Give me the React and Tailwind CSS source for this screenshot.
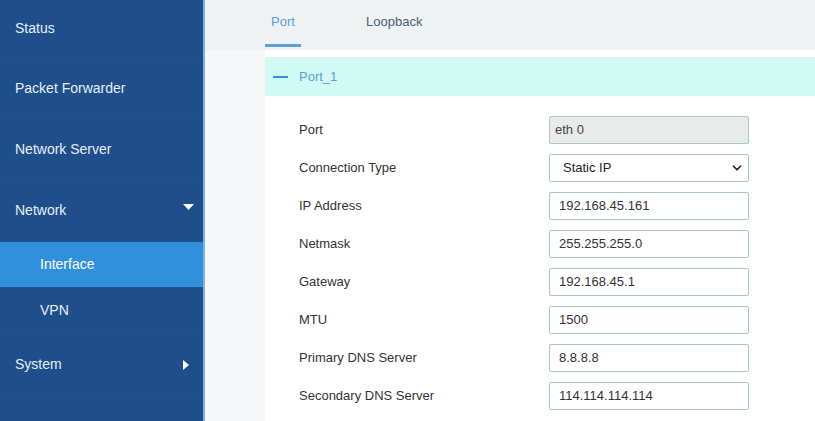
import { ChevronDown } from 'lucide-react';

const font = { fontFamily: '"Liberation Sans", Arial, sans-serif' };

function NavItem({ label, h, sub, active, caret }) {
  return (
    <div
      className={`flex items-center justify-between border-b border-[#21518c] ${sub ? 'pl-10' : 'pl-[15px]'} pr-[9px] text-[14px] ${
        active ? 'bg-[#3190dc] text-white' : 'text-[#e6eef8]'
      } ${h}`}
    >
      <span>{label}</span>
      {caret === 'down' && (
        <svg width="11" height="6" viewBox="0 0 11 6" className="-mt-2">
          <path d="M0 0 L11 0 L5.5 6 Z" fill="#ffffff" />
        </svg>
      )}
      {caret === 'right' && (
        <svg width="6" height="10" viewBox="0 0 6 10" className="mr-[5px]">
          <path d="M0 0 L6 5 L0 10 Z" fill="#ffffff" />
        </svg>
      )}
    </div>
  );
}

function Row({ label, value, kind }) {
  return (
    <div className="flex items-center h-[38px]">
      <div className="w-[284px] pl-[34px] text-[13px] text-[#333]">{label}</div>
      {kind === 'readonly' && (
        <div className="w-[200px] h-[28px] border border-[#a9c7c6] rounded-[2px] bg-[#e8ebea] flex items-center px-[5px] text-[13px] text-[#444]">
          {value}
        </div>
      )}
      {kind === 'select' && (
        <div className="w-[200px] h-[28px] border border-[#a9c7c6] rounded-[2px] bg-white flex items-center justify-between pl-[13px] pr-[4px] text-[13px] text-[#222]">
          <span>{value}</span>
          <ChevronDown size={14} strokeWidth={3} className="text-[#222]" />
        </div>
      )}
      {!kind && (
        <div className="w-[200px] h-[28px] border border-[#a9c7c6] rounded-[2px] bg-white flex items-center px-[9px] text-[13px] text-[#333]">
          {value}
        </div>
      )}
    </div>
  );
}

export default function App() {
  return (
    <div className="flex w-[815px] h-[421px] overflow-hidden bg-[#f5f7f8]" style={font}>
      <aside className="w-[205px] shrink-0 bg-[#1e4f8a] border-r-2 border-[#7fb1dc] flex flex-col">
        <NavItem label="Status" h="h-[58px]" />
        <NavItem label="Packet Forwarder" h="h-[61px]" />
        <NavItem label="Network Server" h="h-[61px]" />
        <NavItem label="Network" h="h-[62px]" caret="down" />
        <NavItem label="Interface" h="h-[46px]" sub active />
        <NavItem label="VPN" h="h-[46px]" sub />
        <NavItem label="System" h="h-[62px]" caret="right" />
      </aside>

      <main className="flex-1 flex flex-col">
        <div className="h-[50px] bg-[#eef2f3] flex items-end pl-[60px] gap-[65px] text-[13px]">
          <div className="flex flex-col items-center">
            <span className="text-[#5a9fd8] px-[5px] pb-[13px]">Port</span>
            <div className="w-[36px] h-[3px] bg-[#5a9fd8] mb-[3px]" />
          </div>
          <div className="pb-[19px] text-[#4c5d78]">Loopback</div>
        </div>
        <div className="flex-1 ml-[60px] bg-white pt-[7px]">
          <div className="h-[39px] bg-[#d2faf5] flex items-center pl-[8px] gap-[11px] text-[13px] text-[#5a9fd8]">
            <div className="w-[15px] h-[2px] bg-[#3a8fd6]" />
            <span>Port_1</span>
          </div>
          <div className="pt-[15px]">
            <Row label="Port" value="eth 0" kind="readonly" />
            <Row label="Connection Type" value="Static IP" kind="select" />
            <Row label="IP Address" value="192.168.45.161" />
            <Row label="Netmask" value="255.255.255.0" />
            <Row label="Gateway" value="192.168.45.1" />
            <Row label="MTU" value="1500" />
            <Row label="Primary DNS Server" value="8.8.8.8" />
            <Row label="Secondary DNS Server" value="114.114.114.114" />
          </div>
        </div>
      </main>
    </div>
  );
}
